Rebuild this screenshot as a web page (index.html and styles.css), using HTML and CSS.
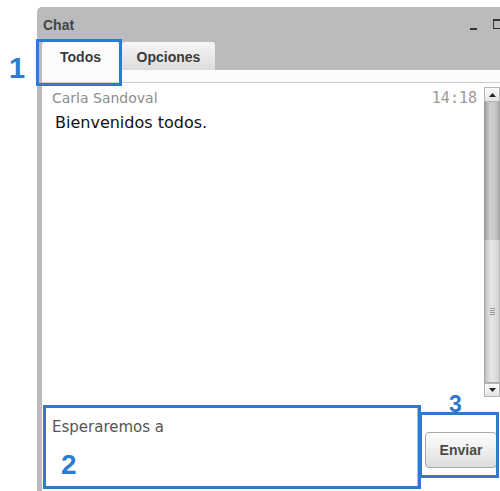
FILE: index.html
```html
<!DOCTYPE html>
<html lang="es">
<head>
<meta charset="utf-8">
<title>Chat</title>
<link rel="stylesheet" href="styles.css">
</head>
<body>
<div class="win">
  <div class="titlebar">
    <span class="title">Chat</span>
    <span class="controls">
      <span class="ctl-min"></span>
      <span class="ctl-max"></span>
    </span>
  </div>
  <div class="tabs">
    <div class="tab tab-active">Todos</div>
    <div class="tab">Opciones</div>
  </div>
  <div class="band"></div>
  <div class="panel">
    <div class="messages">
      <div class="msg-head">
        <span class="author">Carla Sandoval</span>
        <span class="time">14:18</span>
      </div>
      <div class="msg-body">Bienvenidos todos.</div>
    </div>
    <div class="scrollbar">
      <div class="sb-btn sb-up"><svg width="7" height="4" viewBox="0 0 7 4"><path d="M0 4 L3.5 0 L7 4 Z" fill="#222"/></svg></div>
      <div class="sb-track"></div>
      <div class="sb-thumb"><span class="grip"></span></div>
      <div class="sb-btn sb-down"><svg width="7" height="4" viewBox="0 0 7 4"><path d="M0 0 L3.5 4 L7 0 Z" fill="#222"/></svg></div>
    </div>
  </div>
  <div class="composer">
    <div class="input">Esperaremos a</div>
    <div class="send-wrap"><button class="send">Enviar</button></div>
  </div>
</div>

<!-- callouts -->
<div class="callout box-1"></div>
<div class="callout box-2"></div>
<div class="callout box-3"></div>
<span class="num num-1">1</span>
<span class="num num-2">2</span>
<span class="num num-3">3</span>
</body>
</html>
```

FILE: styles.css
```css
html, body {
  margin: 0;
  padding: 0;
  background: #ffffff;
  overflow: hidden;
}

body {
  width: 500px;
  height: 491px;
  position: relative;
  font-family: "Liberation Sans", Arial, sans-serif;
}

/* window frame */
.win {
  margin: 7px 0 0 37px;
  height: 484px;
  background: #bbbbbd;
  border-top-left-radius: 5px;
  padding-left: 5px;
  display: flex;
  flex-direction: column;
  box-sizing: border-box;
}

.titlebar {
  height: 35px;
  display: flex;
  align-items: center;
  justify-content: space-between;
  padding-left: 1px;
  flex: none;
}

.title {
  font-weight: bold;
  font-size: 14px;
  color: #454545;
}

.controls {
  display: flex;
  align-items: flex-start;
  gap: 16px;
  height: 12px;
  margin-right: -2px;
}

.ctl-min {
  width: 7px;
  height: 2px;
  background: #333;
  margin-top: 9px;
}

.ctl-max {
  width: 7px;
  height: 7px;
  border: 1px solid #333;
  border-top-width: 2px;
  margin-top: 0;
}

/* tabs */
.tabs {
  height: 28px;
  display: flex;
  gap: 3px;
  flex: none;
}

.tab {
  width: 93px;
  display: flex;
  align-items: center;
  justify-content: center;
  font-weight: bold;
  font-size: 14px;
  color: #3a3a3a;
  background: linear-gradient(#f6f6f6, #dcdcdc);
  border-radius: 3px 3px 0 0;
  padding-top: 2px;
  box-sizing: border-box;
}

.tab-active {
  width: 77px;
  background: #fcfcfc;
}

.band {
  height: 12px;
  background: #fcfcfc;
  border-bottom: 1px solid #cfcfcf;
  flex: none;
}

/* message list */
.panel {
  height: 314px;
  display: flex;
  background: #ffffff;
  flex: none;
}

.messages {
  flex: 1;
  padding: 6px 7px 0 10px;
  font-family: "DejaVu Sans", Verdana, sans-serif;
}

.msg-head {
  display: flex;
  justify-content: space-between;
  align-items: baseline;
  height: 18px;
}

.author {
  font-size: 14px;
  color: #8c8c8c;
}

.time {
  font-family: "DejaVu Sans Mono", monospace;
  font-size: 15px;
  color: #9a9a9a;
}

.msg-body {
  margin-top: 6px;
  padding-left: 3px;
  font-size: 16px;
  color: #111;
}

/* scrollbar */
.scrollbar {
  width: 16px;
  margin-top: 4px;
  display: flex;
  flex-direction: column;
  flex: none;
}

.sb-btn {
  height: 15px;
  display: flex;
  align-items: center;
  justify-content: center;
  background: linear-gradient(#fbfbfb, #e4e4e4);
  border: 1px solid #b5b5b5;
  box-sizing: border-box;
  flex: none;
}

.sb-down {
  height: 14px;
}

.sb-track {
  height: 138px;
  background: linear-gradient(90deg, #8e8e8e 0, #a9a9a9 2px, #d0d0d0 6px, #c4c4c4 12px, #a0a0a0 16px);
  flex: none;
}

.sb-thumb {
  flex: 1;
  display: flex;
  align-items: center;
  justify-content: center;
  background: linear-gradient(90deg, #9c9c9c 0, #c9c9c9 2px, #e6e6e6 7px, #d8d8d8 14px, #b4b4b4 16px);
  border-bottom: 1px solid #aaa;
}

.grip {
  width: 5px;
  height: 7px;
  background: repeating-linear-gradient(#9a9a9a 0 1px, transparent 1px 2px);
}

/* composer */
.composer {
  flex: 1;
  background: #ffffff;
  display: flex;
  padding: 10px 3px 0 3px;
}

.input {
  width: 373px;
  height: 81px;
  box-sizing: border-box;
  border: 1px solid #b9b9b9;
  padding: 10px 0 0 6px;
  font-family: "DejaVu Sans", Verdana, sans-serif;
  font-size: 15px;
  color: #555;
  flex: none;
}

.send-wrap {
  flex: 1;
  padding: 25px 0 0 7px;
}

.send {
  width: 72px;
  height: 36px;
  border: 1px solid #a9a9a9;
  border-radius: 4px;
  background: linear-gradient(#fdfdfd, #ececec 60%, #dcdcdc);
  font-family: "Liberation Sans", Arial, sans-serif;
  font-weight: bold;
  font-size: 14px;
  color: #4a4a4a;
  padding: 0;
}

/* numbered callouts drawn over the widget */
.callout {
  position: absolute;
  border: 3px solid #2d7bd0;
  box-sizing: border-box;
}

.box-1 { left: 36px;  top: 39px;  width: 86px;  height: 47px; }
.box-2 { left: 43px;  top: 405px; width: 378px; height: 84px; }
.box-3 { left: 419px; top: 412px; width: 80px;  height: 66px; }

.num {
  position: absolute;
  font-family: "Liberation Sans", Arial, sans-serif;
  font-weight: bold;
  color: #2d7bd0;
  line-height: 1;
}

.num-1 { left: 9px;   top: 54px;  font-size: 29px; }
.num-2 { left: 61px;  top: 451px; font-size: 28px; }
.num-3 { left: 449px; top: 393px; font-size: 23px; }
```
